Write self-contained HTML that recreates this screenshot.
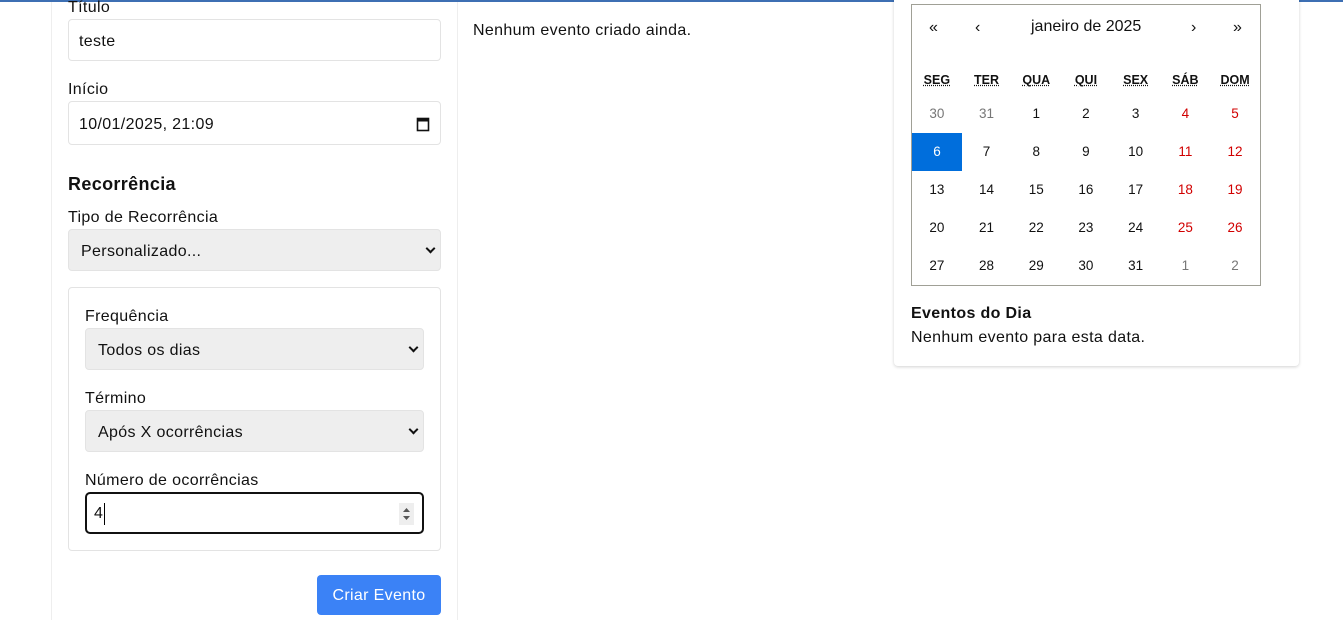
<!DOCTYPE html>
<html><head><meta charset="utf-8"><style>
*{box-sizing:border-box;margin:0;padding:0}
body{width:1343px;height:620px;overflow:hidden;background:#fff;font-family:"Liberation Sans",sans-serif;color:#111;position:relative}
.a{position:absolute}
.t{letter-spacing:0.35px}
.lbl{font-size:16px;line-height:20px;letter-spacing:0.35px}
.in{border:1px solid #e3e3e3;border-radius:4px;background:#fff;font-size:16px;padding-left:10px;display:flex;align-items:center;padding-top:3px;letter-spacing:0.35px}
.sel{border:1px solid #e3e3e3;border-radius:4px;background:#eee;font-size:16px;padding-left:12px;display:flex;align-items:center;padding-top:3px;letter-spacing:0.35px}
.chev{position:absolute;right:6px;top:50%;margin-top:-5px;width:7px;height:7px;border-right:2px solid #111;border-bottom:2px solid #111;transform:rotate(45deg)}
.cal{font-family:"Liberation Sans",sans-serif;font-size:13.5px}
.cell{position:absolute;width:49.7px;height:38px;display:flex;align-items:center;justify-content:center}
.hd{font-weight:bold;font-size:12.5px;text-decoration:underline dotted}
.g{color:#777}.r{color:#d10000}
</style></head><body>
<div class="a" style="left:0;top:0;width:1343px;height:2px;background:#3d6fb3"></div>
<div class="a" style="left:51px;top:2px;width:1px;height:618px;background:#eee"></div>
<div class="a" style="left:457px;top:2px;width:1px;height:618px;background:#eee"></div>

<div class="a lbl" style="left:68px;top:-2px">Título</div>
<div class="a in" style="left:68px;top:19px;width:373px;height:42px">teste</div>
<div class="a lbl" style="left:68px;top:80px">Início</div>
<div class="a in" style="left:68px;top:101px;width:373px;height:44px">10/01/2025, 21:09
<svg class="a" style="right:10px;top:14px" width="14" height="16" viewBox="0 0 14 16"><rect x="1.5" y="2.5" width="11" height="12" fill="none" stroke="#111" stroke-width="1.6"/><rect x="1.5" y="2.5" width="11" height="3" fill="#111"/></svg></div>
<div class="a t" style="left:68px;top:174px;font-size:18px;font-weight:bold">Recorrência</div>
<div class="a lbl" style="left:68px;top:208px">Tipo de Recorrência</div>
<div class="a sel" style="left:68px;top:229px;width:373px;height:42px">Personalizado...<span class="chev"></span></div>

<div class="a" style="left:68px;top:287px;width:373px;height:264px;border:1px solid #e3e3e3;border-radius:4px"></div>
<div class="a lbl" style="left:85px;top:307px">Frequência</div>
<div class="a sel" style="left:85px;top:328px;width:339px;height:42px">Todos os dias<span class="chev"></span></div>
<div class="a lbl" style="left:85px;top:389px">Término</div>
<div class="a sel" style="left:85px;top:410px;width:339px;height:42px">Após X ocorrências<span class="chev"></span></div>
<div class="a lbl" style="left:85px;top:471px">Número de ocorrências</div>
<div class="a" style="left:85px;top:492px;width:339px;height:42px;border:2px solid #111;border-radius:5px;font-size:16px;padding-left:7px;padding-top:2px;display:flex;align-items:center">4<span style="display:inline-block;width:1px;height:22px;background:#000;margin-left:1px"></span>
<div class="a" style="right:8px;top:9px;width:15px;height:22px;background:#eee"><svg width="15" height="22"><path d="M4 9 L7.5 5 L11 9Z M4 13 L7.5 17 L11 13Z" fill="#555"/></svg></div></div>
<div class="a t" style="left:317px;top:575px;width:124px;height:40px;background:#3b82f6;border-radius:4px;color:#fff;font-size:16px;display:flex;align-items:center;justify-content:center;padding-top:2px">Criar Evento</div>

<div class="a t" style="left:473px;top:22px;font-size:16px">Nenhum evento criado ainda.</div>

<div class="a" style="left:894px;top:-4px;width:405px;height:370px;border-radius:4px;box-shadow:0 1px 3px rgba(0,0,0,.18);background:#fff"></div>
<div class="a cal" style="left:911px;top:4px;width:350px;height:282px;border:1px solid #a0a096;background:#fff">
<div class="a" style="left:17px;top:14px;font-size:16px">«</div>
<div class="a" style="left:63px;top:14px;font-size:16px">‹</div>
<div class="a" style="left:119px;top:13px;font-size:16px">janeiro de 2025</div>
<div class="a" style="left:279px;top:14px;font-size:16px">›</div>
<div class="a" style="left:321px;top:14px;font-size:16px">»</div>
</div>

<div class="a t" style="left:911px;top:305px;font-size:16px;font-weight:bold">Eventos do Dia</div>
<div class="a t" style="left:911px;top:329px;font-size:16px">Nenhum evento para esta data.</div>

<div class="a cal" style="left:912px;top:0">
<div class="cell hd" style="left:0;top:61px">SEG</div><div class="cell hd" style="left:49.7px;top:61px">TER</div><div class="cell hd" style="left:99.4px;top:61px">QUA</div><div class="cell hd" style="left:149.1px;top:61px">QUI</div><div class="cell hd" style="left:198.8px;top:61px">SEX</div><div class="cell hd" style="left:248.5px;top:61px">SÁB</div><div class="cell hd" style="left:298.2px;top:61px">DOM</div>

<div class="cell g" style="left:0;top:94px">30</div><div class="cell g" style="left:49.7px;top:94px">31</div><div class="cell" style="left:99.4px;top:94px">1</div><div class="cell" style="left:149.1px;top:94px">2</div><div class="cell" style="left:198.8px;top:94px">3</div><div class="cell r" style="left:248.5px;top:94px">4</div><div class="cell r" style="left:298.2px;top:94px">5</div>

<div class="cell" style="left:0;top:133px;width:50px;background:#006edc;color:#fff;padding-bottom:1px">6</div><div class="cell" style="left:49.7px;top:132px">7</div><div class="cell" style="left:99.4px;top:132px">8</div><div class="cell" style="left:149.1px;top:132px">9</div><div class="cell" style="left:198.8px;top:132px">10</div><div class="cell r" style="left:248.5px;top:132px">11</div><div class="cell r" style="left:298.2px;top:132px">12</div>

<div class="cell" style="left:0;top:170px">13</div><div class="cell" style="left:49.7px;top:170px">14</div><div class="cell" style="left:99.4px;top:170px">15</div><div class="cell" style="left:149.1px;top:170px">16</div><div class="cell" style="left:198.8px;top:170px">17</div><div class="cell r" style="left:248.5px;top:170px">18</div><div class="cell r" style="left:298.2px;top:170px">19</div>

<div class="cell" style="left:0;top:208px">20</div><div class="cell" style="left:49.7px;top:208px">21</div><div class="cell" style="left:99.4px;top:208px">22</div><div class="cell" style="left:149.1px;top:208px">23</div><div class="cell" style="left:198.8px;top:208px">24</div><div class="cell r" style="left:248.5px;top:208px">25</div><div class="cell r" style="left:298.2px;top:208px">26</div>

<div class="cell" style="left:0;top:246px">27</div><div class="cell" style="left:49.7px;top:246px">28</div><div class="cell" style="left:99.4px;top:246px">29</div><div class="cell" style="left:149.1px;top:246px">30</div><div class="cell" style="left:198.8px;top:246px">31</div><div class="cell g" style="left:248.5px;top:246px">1</div><div class="cell g" style="left:298.2px;top:246px">2</div>
</div>
</body></html>
